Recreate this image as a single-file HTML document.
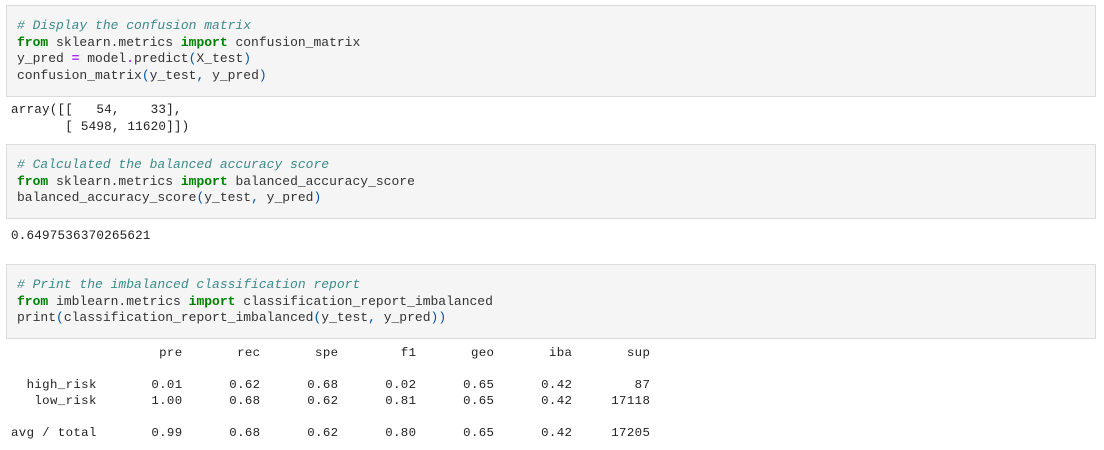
<!DOCTYPE html>
<html><head><style>
body{margin:0;background:#fff;width:1104px;height:450px;overflow:hidden;position:relative;font-family:"Liberation Mono",monospace;font-size:13px;color:#333}
.cell{position:absolute;left:6px;width:1090px;background:#f5f5f5;border:1px solid #dcdcdc;box-sizing:border-box}
pre{margin:0;font-family:"Liberation Mono",monospace;font-size:13px;line-height:16.7px;position:absolute;white-space:pre}
.c{color:#3d8a8a;font-style:italic}
.k{color:#008000;font-weight:bold}
.o{color:#aa22ff;font-weight:bold}
.p{color:#0055aa}
.out{color:#222;font-size:12.6px;letter-spacing:0.2px}
</style></head><body>
<div class="cell" style="top:5px;height:92px"></div>
<pre style="left:17px;top:18px"><span class="c"># Display the confusion matrix</span>
<span class="k">from</span> sklearn.metrics <span class="k">import</span> confusion_matrix
y_pred <span class="o">=</span> model<span class="o">.</span>predict<span class="p">(</span>X_test<span class="p">)</span>
confusion_matrix<span class="p">(</span>y_test<span class="p">,</span> y_pred<span class="p">)</span></pre>
<pre class="out" style="left:11px;top:102px">array([[   54,    33],
       [ 5498, 11620]])</pre>

<div class="cell" style="top:144px;height:75px"></div>
<pre style="left:17px;top:157px"><span class="c"># Calculated the balanced accuracy score</span>
<span class="k">from</span> sklearn.metrics <span class="k">import</span> balanced_accuracy_score
balanced_accuracy_score<span class="p">(</span>y_test<span class="p">,</span> y_pred<span class="p">)</span></pre>
<pre class="out" style="left:11px;top:228px">0.6497536370265621</pre>

<div class="cell" style="top:264px;height:75px"></div>
<pre style="left:17px;top:277px"><span class="c"># Print the imbalanced classification report</span>
<span class="k">from</span> imblearn.metrics <span class="k">import</span> classification_report_imbalanced
print<span class="p">(</span>classification_report_imbalanced<span class="p">(</span>y_test<span class="p">,</span> y_pred<span class="p">))</span></pre>
<pre class="out" style="left:11px;top:345px;font-size:12.4px;letter-spacing:0.36px;line-height:16px">                   pre       rec       spe        f1       geo       iba       sup

  high_risk       0.01      0.62      0.68      0.02      0.65      0.42        87
   low_risk       1.00      0.68      0.62      0.81      0.65      0.42     17118

avg / total       0.99      0.68      0.62      0.80      0.65      0.42     17205</pre>
</body></html>
